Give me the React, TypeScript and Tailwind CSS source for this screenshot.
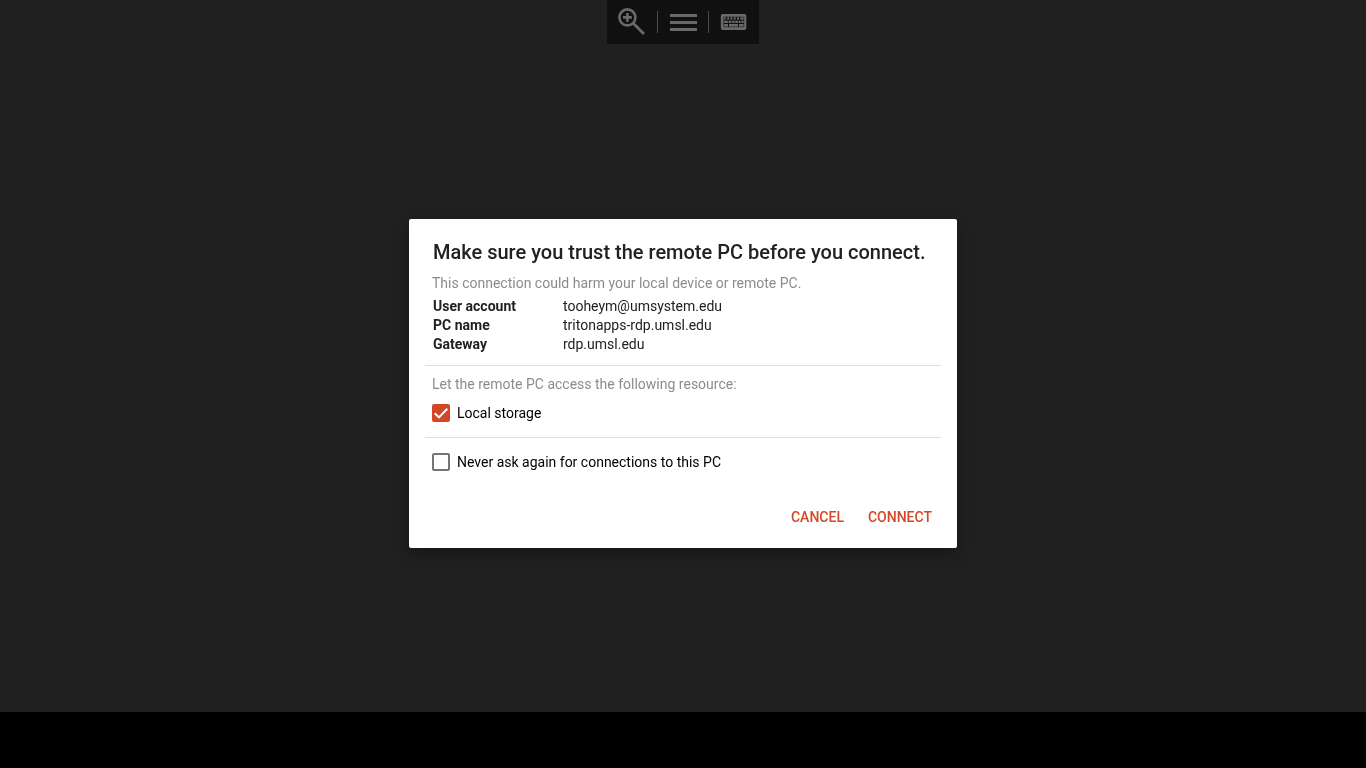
import React, { useState } from "react";

const details = [
  { label: "User account", value: "tooheym@umsystem.edu" },
  { label: "PC name", value: "tritonapps-rdp.umsl.edu" },
  { label: "Gateway", value: "rdp.umsl.edu" },
];

const ZoomIcon = () => (
  <svg width="28" height="28" viewBox="0 0 28 28" fill="none" stroke="currentColor">
    <circle cx="9.4" cy="9.4" r="8" strokeWidth="2.6" />
    <path d="M9.4 5v8.8M5 9.4h8.8" strokeWidth="2.6" />
    <path d="M15 15l11 11" strokeWidth="2.8" />
  </svg>
);

const MenuIcon = () => (
  <svg width="28" height="28" viewBox="0 0 28 28" fill="currentColor">
    <path d="M1 6h27v3H1zM1 13h27v3H1zM1 20h27v3H1z" />
  </svg>
);

const KeyboardIcon = () => (
  <svg width="28" height="28" viewBox="0 0 28 28" fill="currentColor">
    <rect x="0.8" y="6" width="25.5" height="16" rx="2" />
    <g stroke="#101010">
      <path d="M3.8 12.2h20M3.8 15.5h20" strokeWidth="1" />
      <path d="M3.8 9h20M3.8 18.8h20M3.8 9v9.8M23.8 9v9.8" strokeWidth="0.5" />
      <path d="M6.5 9v3M9.8 9v3M13.1 9v3M16.4 9v3M19.7 9v3" strokeWidth="1.4" />
      <path d="M8.3 12v3M11.6 12v3M14.9 12v3M18.3 12v3M21 12v3" strokeWidth="0.8" />
      <path d="M8.5 15.3v3.5M18.5 15.3v3.5" strokeWidth="1" />
    </g>
  </svg>
);

type CheckProps = {
  label: string;
  checked: boolean;
  onChange: (checked: boolean) => void;
};

const Check: React.FC<CheckProps> = ({ label, checked, onChange }) => (
  <label className="flex items-center gap-[7px] text-sm text-black">
    <span className="grid size-[18px]">
      <input
        type="checkbox"
        checked={checked}
        onChange={(e) => onChange(e.target.checked)}
        className="col-start-1 row-start-1 size-[18px] appearance-none rounded-xs border-2 border-[#757575] checked:border-[#d24726] checked:bg-[#d24726]"
      />
      {checked && (
        <svg className="pointer-events-none col-start-1 row-start-1" width="18" height="18" viewBox="0 0 18 18" fill="none">
          <path d="M2.7 9.2l4.3 4.2 8.3-8.6" stroke="white" strokeWidth="2" />
        </svg>
      )}
    </span>
    {label}
  </label>
);

const App: React.FC = () => {
  const [localStorage, setLocalStorage] = useState(true);
  const [neverAsk, setNeverAsk] = useState(false);

  return (
    <div className="flex min-h-screen flex-col bg-[#202020] font-['Roboto',sans-serif]">
      <header className="flex justify-center">
        <div className="flex h-11 items-center bg-[#101010] text-[#696969]">
          <button aria-label="Zoom" className="flex w-[50px] justify-center">
            <ZoomIcon />
          </button>
          <span className="h-[22px] w-px bg-[#4a4a4a]" />
          <button aria-label="Menu" className="flex w-[50px] justify-center">
            <MenuIcon />
          </button>
          <span className="h-[22px] w-px bg-[#4a4a4a]" />
          <button aria-label="Keyboard" className="flex w-[50px] justify-center">
            <KeyboardIcon />
          </button>
        </div>
      </header>
      <main className="flex-1" />
      <footer className="h-14 bg-black" />

      <div className="fixed inset-0 flex items-center justify-center pb-px">
        <div
          role="dialog"
          aria-labelledby="dialog-title"
          className="w-full max-w-[548px] rounded-xs bg-white px-4 pt-[19px] pb-[13px] text-[#212121] shadow-[0_6px_16px_rgba(0,0,0,0.3)]"
        >
          <h1 id="dialog-title" className="px-2 text-xl leading-7 font-medium">
            Make sure you trust the remote PC before you connect.
          </h1>
          <p className="mt-[7px] px-[7px] text-sm text-[#8c8c8c]">
            This connection could harm your local device or remote PC.
          </p>
          <table className="mx-2 mt-1 mb-[11px] text-sm leading-[19px]">
            <tbody>
              {details.map((item) => (
                <tr key={item.label}>
                  <th scope="row" className="w-[130px] text-left font-bold">
                    {item.label}
                  </th>
                  <td>{item.value}</td>
                </tr>
              ))}
            </tbody>
          </table>
          <div className="border-y border-[#dedede] px-[7px] pt-2 pb-[14px]">
            <p className="mb-[9px] text-sm text-[#8c8c8c]">Let the remote PC access the following resource:</p>
            <Check label="Local storage" checked={localStorage} onChange={setLocalStorage} />
          </div>
          <div className="px-[7px] pt-[14px]">
            <Check label="Never ask again for connections to this PC" checked={neverAsk} onChange={setNeverAsk} />
          </div>
          <div className="mt-[27px] flex justify-end gap-2 pr-px text-sm font-medium text-[#d24726]">
            <button className="h-9 px-2">CANCEL</button>
            <button className="h-9 px-2">CONNECT</button>
          </div>
        </div>
      </div>
    </div>
  );
};

export default App;
